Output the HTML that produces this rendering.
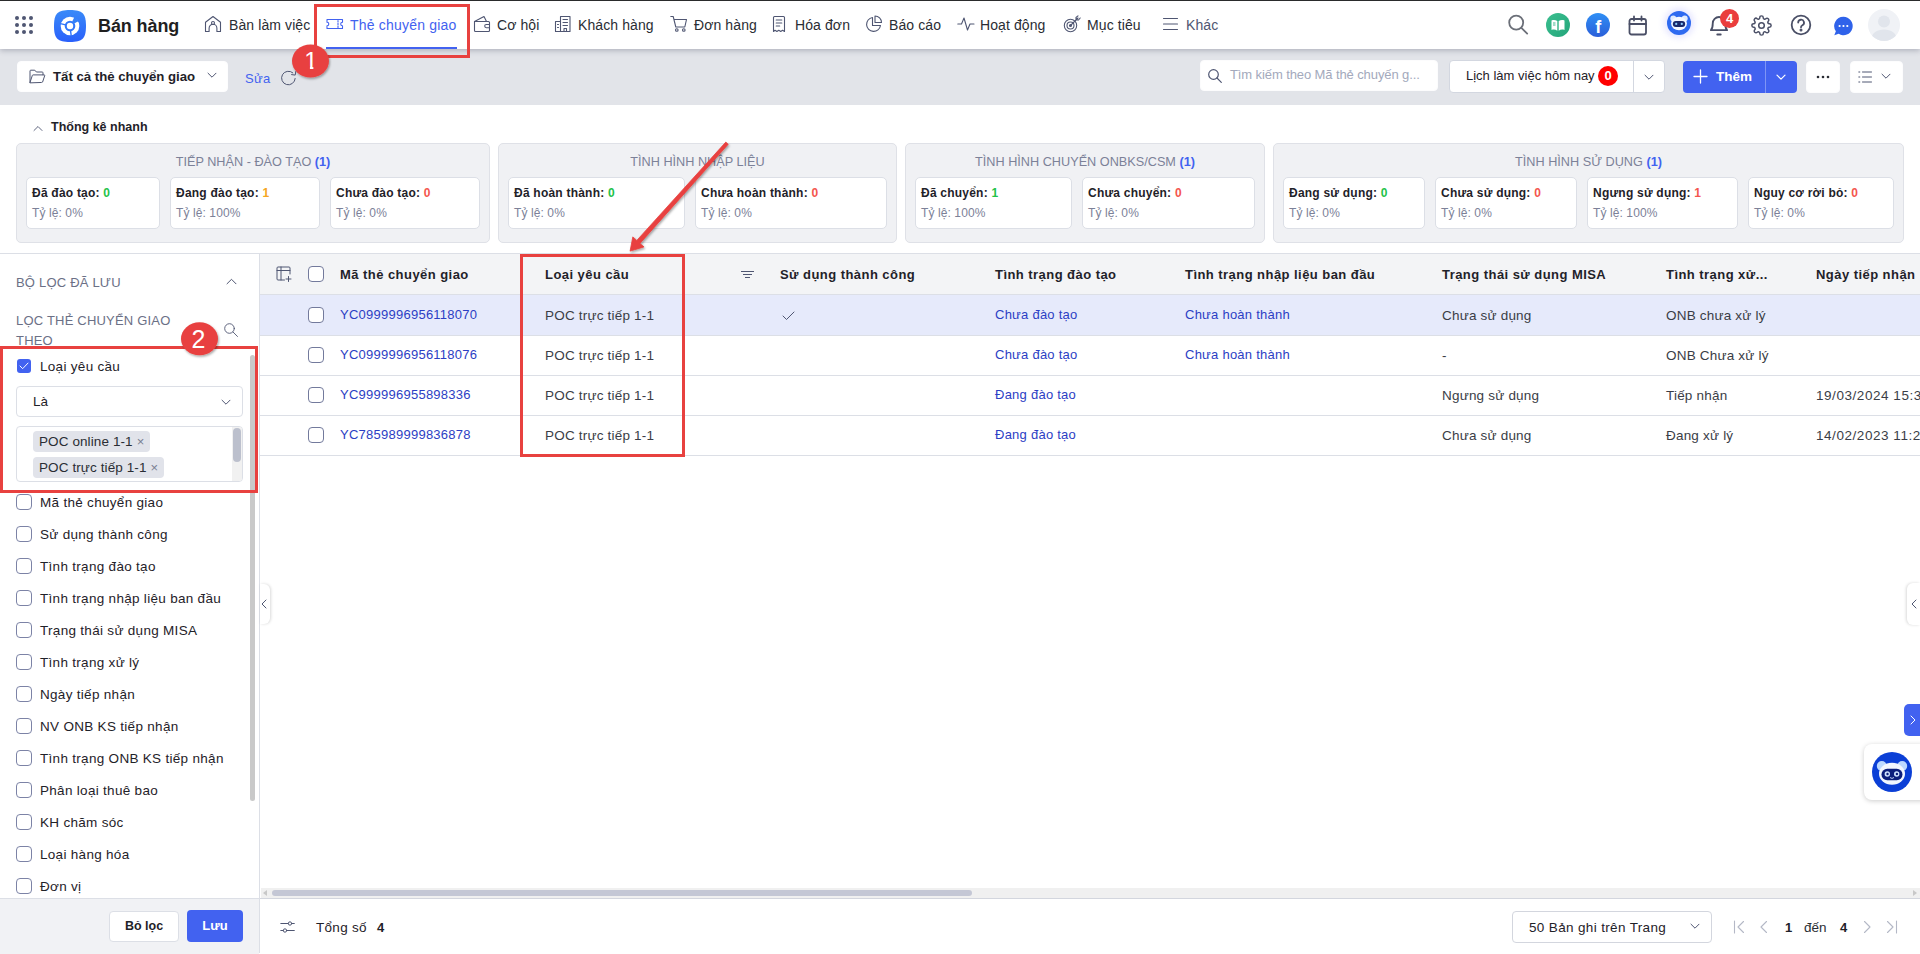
<!DOCTYPE html>
<html lang="vi">
<head>
<meta charset="utf-8">
<title>Thẻ chuyển giao</title>
<style>
*{box-sizing:border-box;margin:0;padding:0}
html,body{width:1920px;height:954px;overflow:hidden;background:#fff}
body{font-family:"Liberation Sans",sans-serif;font-size:13px;color:#1f2229;position:relative}
.abs{position:absolute}
svg{display:block}
/* header */
#topline{left:0;top:0;width:1920px;height:1px;background:#2b2b2b}
#header{left:0;top:1px;width:1920px;height:48px;background:#fff;box-shadow:0 2px 5px rgba(60,66,90,.28);z-index:5}
#toolbar{left:0;top:49px;width:1920px;height:56px;background:#e2e4e9}
.nav{position:absolute;top:0;height:48px;line-height:49px;font-size:14px;color:#2a2d34;white-space:nowrap;letter-spacing:.1px}
.nav svg{position:absolute;top:14px;stroke-width:1.100}
.brand{position:absolute;left:98px;top:0;line-height:51px;font-size:18px;font-weight:bold;color:#1f1f1f;letter-spacing:-.1px}

.nav.act{color:#4262f0;letter-spacing:.2px}
.nav i{position:absolute;left:0;top:15px;width:18px;height:18px}
.ico{fill:none;stroke:#4f5672;stroke-width:1;stroke-linecap:round;stroke-linejoin:round}
.btn{position:absolute;background:#fff;border:1px solid #d3d7e0;border-radius:4px}
.t{position:absolute;white-space:nowrap}

.grp{position:absolute;top:143px;height:100px;background:#f0f1f4;border:1px solid #dfe1e7;border-radius:5px}
.gt{position:absolute;top:144px;height:36px;line-height:37px;text-align:center;font-size:12.700px;color:#7c8198;white-space:nowrap}
.gt b{color:#4262f0}
.card{position:absolute;top:177px;height:52px;background:#fff;border:1px solid #dcdfe6;border-radius:5px;padding:0 0 0 5px;white-space:nowrap}
.card b{display:block;letter-spacing:.22px;font-size:12px;line-height:14px;margin-top:8px;color:#1f2229}
.card span{display:block;letter-spacing:.1px;font-size:12px;line-height:14px;margin-top:6px;color:#7c8198}
.g{color:#1fc24a}.o{color:#f5a623}.r{color:#f4564e}

#side{left:0;top:253px;width:260px;height:700px;border-right:1px solid #dcdfe6;border-top:1px solid #dcdfe6;background:#fff}
.cb{position:absolute;left:16px;width:16px;height:16px;border:1px solid #7c83a6;border-radius:4px;background:#fff}
.fl{position:absolute;left:40px;font-size:13.500px;line-height:18px;color:#1f2229;white-space:nowrap;letter-spacing:.3px}
.sh{position:absolute;left:16px;font-size:13px;line-height:22px;color:#6b7086;letter-spacing:.2px;white-space:nowrap}
.tag{position:absolute;left:33px;height:21px;line-height:22.500px;background:#e1e3ea;border-radius:4px;padding:0 6px;font-size:13.500px;color:#2a2d34;white-space:nowrap;letter-spacing:.1px}
.tag i{font-style:normal;color:#7a7f92;margin-left:4px;font-size:13px}

#th{left:260px;top:253px;width:1660px;height:42px;background:#f3f4f6;border-top:1px solid #dcdfe6;border-bottom:1px solid #dcdfe6}
.hc{position:absolute;top:254px;line-height:41px;font-size:13px;font-weight:bold;color:#1f2229;white-space:nowrap;letter-spacing:.45px}
.rl{position:absolute;left:260px;width:1660px;height:1px;background:#dcdfe6}
.c{position:absolute;line-height:42px;font-size:13.500px;color:#3a3d46;white-space:nowrap;letter-spacing:.2px}
.lk{color:#2c3ec4;font-size:13px;letter-spacing:.25px}
.tcb{position:absolute;left:308px;width:16px;height:16px;border:1px solid #737a9c;border-radius:4px;background:#fff}
</style>
</head>
<body>
<div id="topline" class="abs"></div>
<div id="header" class="abs">
  <!-- app grid -->
  <svg class="abs" style="left:14px;top:14px" width="20" height="20" viewBox="0 0 20 20" fill="#4f5672">
    <circle cx="3" cy="3" r="2"/><circle cx="10" cy="3" r="2"/><circle cx="17" cy="3" r="2"/>
    <circle cx="3" cy="10" r="2"/><circle cx="10" cy="10" r="2"/><circle cx="17" cy="10" r="2"/>
    <circle cx="3" cy="17" r="2"/><circle cx="10" cy="17" r="2"/><circle cx="17" cy="17" r="2"/>
  </svg>
  <!-- logo -->
  <svg class="abs" style="left:54px;top:9px" width="32" height="32" viewBox="0 0 32 32">
    <defs><linearGradient id="lg" x1="0" y1="0" x2="0" y2="1"><stop offset="0" stop-color="#3a8af8"/><stop offset="1" stop-color="#2a60fb"/></linearGradient></defs>
    <path d="M16 0C28.500 0 32 3.500 32 16S28.500 32 16 32 0 28.500 0 16 3.500 0 16 0Z" fill="url(#lg)"/>
    <circle cx="16" cy="16" r="9.300" fill="#fff"/>
    <circle cx="16" cy="16" r="5.300" fill="#3277f9"/>
    <circle cx="16" cy="16" r="3.200" fill="#fff"/>
    <path d="M18.1 11.7L20.4 7.0L24.7 11.0L20.2 13.6Z" fill="#3480f8"/>
    <path d="M11.6 14.9L6.5 13.6M16.5 20.5L17.2 25.7" stroke="#3174f9" stroke-width="1.400" fill="none"/>
  </svg>
  <div class="brand">Bán hàng</div>

  <!-- nav -->
  <div class="nav" style="left:204px;padding-left:25px">Bàn làm việc
    <svg class="ico" style="left:0" width="18" height="18" viewBox="0 0 18 18"><path d="M1.5 16.5V7.2L9 1.5l7.500 5.700v9.300h-3.600v-3.300a3.900 3.900 0 0 0-7.800 0v3.300z"/><circle cx="9" cy="8" r="1.500"/></svg></div>
  <div class="nav act" style="left:326px;padding-left:24px">Thẻ chuyển giao
    <svg class="ico" style="left:0;stroke:#4262f0" width="18" height="18" viewBox="0 0 18 18"><path d="M1 4.500h15.500v2.700a1.800 1.800 0 0 0 0 3.600v2.700H1v-2.700a1.800 1.800 0 0 0 0-3.600z"/><path d="M12 5.500v1.500M12 8.300v1.500M12 11v1.500"/></svg></div>
  <div class="abs" style="left:326px;top:46px;width:131px;height:2px;background:#4262f0"></div>
  <div class="nav" style="left:473px;padding-left:24px">Cơ hội
    <svg class="ico" style="left:0" width="18" height="18" viewBox="0 0 18 18"><path d="M1.500 6.500h14a1 1 0 0 1 1 1v8a1 1 0 0 1-1 1h-13a1 1 0 0 1-1-1z"/><path d="M1.500 6.500L11 1.500l2.500 5"/><path d="M16.500 9.500h-3.200a1.600 1.600 0 0 0 0 3.200h3.200"/></svg></div>
  <div class="nav" style="left:554px;padding-left:24px">Khách hàng
    <svg class="ico" style="left:0" width="18" height="18" viewBox="0 0 18 18"><path d="M6.500 16.500V1.500h9.500v15z"/><path d="M6.500 6.500H1.500v10h5"/><path d="M9 4.500h4.500M9 7.500h4.500M9 10.500h4.500M3.500 9.500h1M3.500 12.500h1M10 16.500v-3h2.500v3"/></svg></div>
  <div class="nav" style="left:670px;padding-left:24px">Đơn hàng
    <svg class="ico" style="left:0" width="18" height="18" viewBox="0 0 18 18"><path d="M.8 1.500h2.400l2.600 10.500h9l1.700-7.500H4"/><circle cx="6.800" cy="15" r="1.300"/><circle cx="13.800" cy="15" r="1.300"/></svg></div>
  <div class="nav" style="left:771px;padding-left:24px">Hóa đơn
    <svg class="ico" style="left:0" width="18" height="18" viewBox="0 0 18 18"><path d="M2.500 16.500V2.500a1 1 0 0 1 1-1h9a1 1 0 0 1 1 1v14l-1.900-1.200-1.900 1.200-1.900-1.200-1.900 1.200-1.900-1.200z"/><path d="M5.200 5h5.600M5.200 8h5.600M5.200 11h3.500"/></svg></div>
  <div class="nav" style="left:865px;padding-left:24px">Báo cáo
    <svg class="ico" style="left:0" width="18" height="18" viewBox="0 0 18 18"><path d="M7.500 2.500a7 7 0 1 0 8 8h-8z"/><path d="M10 1v6.500h6.500A6.500 6.500 0 0 0 10 1z"/></svg></div>
  <div class="nav" style="left:957px;padding-left:23px">Hoạt động
    <svg class="ico" style="left:0" width="18" height="18" viewBox="0 0 18 18"><path d="M.8 9h3.700L7 3l3.500 12 2.500-6h4"/></svg></div>
  <div class="nav" style="left:1063px;padding-left:24px">Mục tiêu
    <svg class="ico" style="left:0" width="18" height="18" viewBox="0 0 18 18"><circle cx="7.500" cy="10.500" r="6.200"/><circle cx="7.500" cy="10.500" r="3.500"/><circle cx="7.500" cy="10.500" r="1"/><path d="M7.500 10.500L15 3M13 2.500v2.500h2.500M15 .8l-2 1.700M17.200 3l-1.700 2"/></svg></div>
  <div class="nav" style="left:1162px;padding-left:24px;color:#4f5672">Khác
    <svg class="ico" style="left:0" width="18" height="18" viewBox="0 0 18 18"><path d="M1.500 3.500h14M1.500 9h14M1.500 14.500h14"/></svg></div>

  <!-- right icons -->
  <svg class="abs" style="left:1505px;top:10px" width="26" height="26" viewBox="0 0 26 26" fill="none" stroke="#6b6f78" stroke-width="1.800" stroke-linecap="round"><circle cx="11.200" cy="11.600" r="7"/><path d="M16.400 16.800l5.800 5.800"/></svg>
  <svg class="abs" style="left:1546px;top:12px" width="24" height="24" viewBox="0 0 24 24"><defs><linearGradient id="gg" x1="0" y1="0" x2="1" y2="1"><stop offset="0" stop-color="#3bbf8f"/><stop offset="1" stop-color="#23a57a"/></linearGradient></defs><circle cx="12" cy="12" r="12" fill="url(#gg)"/><path d="M5.500 7.500c2-.8 4-.6 5.800.6v9.600c-1.800-1.200-3.800-1.400-5.800-.6z" fill="#fff"/><path d="M18.500 7.500c-2-.8-4-.6-5.800.6v9.600c1.800-1.200 3.800-1.400 5.800-.6z" fill="#fff"/><path d="M7 10h2.500M7 12h2.500" stroke="#2fb085" stroke-width=".9"/></svg>
  <svg class="abs" style="left:1586px;top:12px" width="24" height="24" viewBox="0 0 24 24"><defs><linearGradient id="fg" x1="0" y1="0" x2="0" y2="1"><stop offset="0" stop-color="#2f8ff5"/><stop offset="1" stop-color="#2b5fd9"/></linearGradient></defs><circle cx="12" cy="12" r="12" fill="url(#fg)"/><text x="12.300" y="20" text-anchor="middle" font-family="Liberation Sans,sans-serif" font-weight="bold" font-size="18" fill="#fff">f</text></svg>
  <svg class="abs" style="left:1627px;top:13px" width="22" height="24" viewBox="0 0 22 24" fill="none" stroke="#4a4f66" stroke-width="1.800" stroke-linecap="round" stroke-linejoin="round"><rect x="2.500" y="5" width="16.500" height="15.500" rx="2"/><path d="M2.500 10h16.500M7 2.500v4M14.500 2.500v4"/></svg>
  <div class="abs" style="left:1667px;top:10px;width:24px;height:24px;border-radius:50%;background:#2e6af0;box-shadow:0 0 6px 3px rgba(130,130,255,.2)"></div>
  <svg class="abs" style="left:1667px;top:10px" width="24" height="24" viewBox="0 0 26 26"><circle cx="6.800" cy="8" r="3.200" fill="#dfeaff"/><circle cx="19.200" cy="8" r="3.200" fill="#dfeaff"/><ellipse cx="13" cy="13.500" rx="8.600" ry="7.400" fill="#f4f8ff"/><rect x="6.300" y="10.800" width="13.400" height="6.600" rx="3.300" fill="#1a2a6c"/><circle cx="10" cy="14" r="1.200" fill="#8fd0ff"/><circle cx="16" cy="14" r="1.200" fill="#8fd0ff"/></svg>
  <svg class="abs" style="left:1704px;top:9px" width="30" height="30" viewBox="0 0 26 26" fill="none" stroke="#4a4f66" stroke-width="1.600" stroke-linecap="round" stroke-linejoin="round"><path d="M6 17.500c1.300-1.500 1.600-3 1.600-6a5.400 5.400 0 0 1 10.800 0c0 3 .3 4.500 1.600 6z"/><path d="M11.500 21.200h3"/></svg>
  <div class="abs" style="left:1720px;top:8px;width:19px;height:19px;border-radius:50%;background:#ea3d3d;color:#fff;font-weight:bold;font-size:13px;line-height:19px;text-align:center">4</div>
  <svg class="abs" style="left:1751px;top:14px" width="21" height="21" viewBox="0 0 24 24" fill="none" stroke="#4a4f66" stroke-width="1.700" stroke-linecap="round" stroke-linejoin="round"><circle cx="12" cy="12" r="3.200"/><path d="M19.400 15a1.650 1.650 0 0 0 .33 1.820l.06.06a2 2 0 1 1-2.830 2.830l-.06-.06a1.650 1.650 0 0 0-1.820-.33 1.650 1.650 0 0 0-1 1.510V21a2 2 0 0 1-4 0v-.09A1.650 1.650 0 0 0 9 19.400a1.650 1.650 0 0 0-1.820.33l-.06.06a2 2 0 1 1-2.830-2.830l.06-.06a1.650 1.650 0 0 0 .33-1.820 1.650 1.650 0 0 0-1.510-1H3a2 2 0 0 1 0-4h.09A1.650 1.650 0 0 0 4.600 9a1.650 1.650 0 0 0-.33-1.820l-.06-.06a2 2 0 1 1 2.830-2.830l.06.06a1.650 1.650 0 0 0 1.820.33H9a1.650 1.650 0 0 0 1-1.510V3a2 2 0 0 1 4 0v.09a1.650 1.650 0 0 0 1 1.510 1.650 1.650 0 0 0 1.820-.33l.06-.06a2 2 0 1 1 2.830 2.830l-.06.06a1.650 1.650 0 0 0-.33 1.820V9a1.650 1.650 0 0 0 1.510 1H21a2 2 0 0 1 0 4h-.09a1.650 1.650 0 0 0-1.510 1z"/></svg>
  <svg class="abs" style="left:1789px;top:12px" width="24" height="24" viewBox="0 0 24 24" fill="none" stroke="#4a4f66" stroke-width="1.800" stroke-linecap="round" stroke-linejoin="round"><circle cx="12" cy="12" r="9.300"/><path d="M9.200 9.600a2.900 2.900 0 1 1 4.200 2.600c-.9.500-1.400 1-1.400 2.100"/><circle cx="12" cy="17" r=".6" fill="#4a4f66"/></svg>
  <svg class="abs" style="left:1832px;top:14px" width="22" height="22" viewBox="0 0 24 24"><path d="M12.500 2a10 10 0 1 1-5.200 18.500L2.500 22l1.700-4.300A10 10 0 0 1 12.500 2z" fill="#2f62ea"/><circle cx="8.300" cy="12" r="1.200" fill="#fff"/><circle cx="12.500" cy="12" r="1.200" fill="#fff"/><circle cx="16.700" cy="12" r="1.200" fill="#fff"/></svg>
  <svg class="abs" style="left:1868px;top:8px" width="32" height="32" viewBox="0 0 32 32"><defs><clipPath id="av"><circle cx="16" cy="16" r="16"/></clipPath></defs><circle cx="16" cy="16" r="16" fill="#f0f2f6"/><g clip-path="url(#av)" fill="#e1e5ec"><circle cx="16" cy="12.500" r="6"/><path d="M3 32c0-8 6-11.500 13-11.500S29 24 29 32z"/></g></svg>
</div>
<div id="toolbar" class="abs">
  <div class="btn" style="left:17px;top:12px;width:211px;height:31px;border-color:#fdfdfe"></div>
  <svg class="abs ico" style="left:29px;top:20px" width="17" height="16" viewBox="0 0 17 16"><path d="M1 13.500V2a.8.800 0 0 1 .8-.8h4l1.600 1.800h5.800a.8.800 0 0 1 .8.800v2"/><path d="M1 13.500l2.300-7a.8.800 0 0 1 .8-.6h11a.6.600 0 0 1 .6.800l-2.100 6.300a.8.800 0 0 1-.8.500z"/></svg>
  <div class="t" style="left:53px;top:12px;line-height:31px;font-size:13.200px;font-weight:bold;color:#1f2229">Tất cả thẻ chuyển giao</div>
  <svg class="abs ico" style="left:207px;top:23px" width="10" height="7" viewBox="0 0 10 7"><path d="M1 1.200l4 4 4-4"/></svg>
  <div class="t" style="left:245px;top:14px;line-height:31px;font-size:13px;letter-spacing:.3px;color:#4262f0">Sửa</div>
  <svg class="abs ico" style="left:280px;top:20px;stroke-width:1" width="18" height="18" viewBox="0 0 18 18"><path d="M15.200 9.500A6.800 6.800 0 1 1 12.800 3.800"/><path d="M15.800 2.500l-.6 3.600-3.600-.5"/></svg>

  <div class="btn" style="left:1200px;top:11px;width:238px;height:31px;border-color:#fcfcfd"></div>
  <svg class="abs" style="left:1207px;top:19px" width="16" height="16" viewBox="0 0 16 16" fill="none" stroke="#4f5672" stroke-width="1.200" stroke-linecap="round"><circle cx="6.500" cy="6.500" r="4.800"/><path d="M10 10l4.300 4.300"/></svg>
  <div class="t" style="left:1230px;top:10px;line-height:31px;font-size:13px;letter-spacing:-.1px;color:#a3a9bc">Tìm kiếm theo Mã thẻ chuyến g...</div>

  <div class="btn" style="left:1449px;top:11px;width:216px;height:33px"></div>
  <div class="abs" style="left:1633px;top:11px;width:1px;height:33px;background:#d3d7e0"></div>
  <div class="t" style="left:1466px;top:11px;line-height:31px;font-size:13px;color:#1f2229">Lịch làm việc hôm nay</div>
  <div class="abs" style="left:1598px;top:17px;width:20px;height:20px;border-radius:50%;background:#f00;color:#fff;font-weight:bold;font-size:13px;line-height:20px;text-align:center">0</div>
  <svg class="abs ico" style="left:1644px;top:25px" width="10" height="7" viewBox="0 0 10 7"><path d="M1 1.200l4 4 4-4"/></svg>

  <div class="abs" style="left:1683px;top:12px;width:114px;height:32px;border-radius:4px;background:#4262f0"></div>
  <div class="abs" style="left:1765px;top:12px;width:1px;height:32px;background:#7f95f5"></div>
  <svg class="abs" style="left:1693px;top:20px" width="15" height="15" viewBox="0 0 15 15" fill="none" stroke="#fff" stroke-width="1.300" stroke-linecap="round"><path d="M7.500 1v13M1 7.500h13"/></svg>
  <div class="t" style="left:1716px;top:12px;line-height:31px;font-size:13.500px;font-weight:bold;color:#fff">Thêm</div>
  <svg class="abs" style="left:1776px;top:25px" width="10" height="7" viewBox="0 0 10 7" fill="none" stroke="#fff" stroke-width="1.200" stroke-linecap="round" stroke-linejoin="round"><path d="M1 1.200l4 4 4-4"/></svg>

  <div class="btn" style="left:1806px;top:12px;width:34px;height:32px;border-color:#fcfcfd"></div>
  <svg class="abs" style="left:1816px;top:26px" width="14" height="4" viewBox="0 0 14 4" fill="#2a2d34"><circle cx="2" cy="2" r="1.300"/><circle cx="7" cy="2" r="1.300"/><circle cx="12" cy="2" r="1.300"/></svg>
  <div class="btn" style="left:1850px;top:12px;width:53px;height:32px;border-color:#fcfcfd"></div>
  <svg class="abs ico" style="left:1858px;top:21px" width="14" height="14" viewBox="0 0 14 14"><path d="M4.500 2h9M4.500 7h9M4.500 12h9M.8 2h1M.8 7h1M.8 12h1"/></svg>
  <svg class="abs ico" style="left:1881px;top:24px" width="10" height="7" viewBox="0 0 10 7"><path d="M1 1.200l4 4 4-4"/></svg>
</div>

<!-- quick stats -->
<svg class="abs ico" style="left:33px;top:125px;stroke-width:.9" width="10" height="7" viewBox="0 0 10 7"><path d="M1 5.500l4-4 4 4"/></svg>
<div class="t" style="left:51px;top:118px;line-height:18px;font-size:12.500px;font-weight:bold;color:#1f2229">Thống kê nhanh</div>
<div class="grp" style="left:16px;width:474px"></div>
<div class="gt" style="left:16px;width:474px">TIẾP NHẬN - ĐÀO TẠO <b>(1)</b></div>
<div class="card" style="left:26px;width:134px"><b>Đã đào tạo: <i class="g" style="font-style:normal">0</i></b><span>Tỷ lệ: 0%</span></div>
<div class="card" style="left:170px;width:150px"><b>Đang đào tạo: <i class="o" style="font-style:normal">1</i></b><span>Tỷ lệ: 100%</span></div>
<div class="card" style="left:330px;width:150px"><b>Chưa đào tạo: <i class="r" style="font-style:normal">0</i></b><span>Tỷ lệ: 0%</span></div>
<div class="grp" style="left:498px;width:399px"></div>
<div class="gt" style="left:498px;width:399px">TÌNH HÌNH NHẬP LIỆU</div>
<div class="card" style="left:508px;width:177px"><b>Đã hoàn thành: <i class="g" style="font-style:normal">0</i></b><span>Tỷ lệ: 0%</span></div>
<div class="card" style="left:695px;width:192px"><b>Chưa hoàn thành: <i class="r" style="font-style:normal">0</i></b><span>Tỷ lệ: 0%</span></div>
<div class="grp" style="left:905px;width:360px"></div>
<div class="gt" style="left:905px;width:360px">TÌNH HÌNH CHUYỂN ONBKS/CSM <b>(1)</b></div>
<div class="card" style="left:915px;width:157px"><b>Đã chuyển: <i class="g" style="font-style:normal">1</i></b><span>Tỷ lệ: 100%</span></div>
<div class="card" style="left:1082px;width:173px"><b>Chưa chuyển: <i class="r" style="font-style:normal">0</i></b><span>Tỷ lệ: 0%</span></div>
<div class="grp" style="left:1273px;width:631px"></div>
<div class="gt" style="left:1273px;width:631px">TÌNH HÌNH SỬ DỤNG <b>(1)</b></div>
<div class="card" style="left:1283px;width:142px"><b>Đang sử dụng: <i class="g" style="font-style:normal">0</i></b><span>Tỷ lệ: 0%</span></div>
<div class="card" style="left:1435px;width:142px"><b>Chưa sử dụng: <i class="r" style="font-style:normal">0</i></b><span>Tỷ lệ: 0%</span></div>
<div class="card" style="left:1587px;width:151px"><b>Ngưng sử dụng: <i class="r" style="font-style:normal">1</i></b><span>Tỷ lệ: 100%</span></div>
<div class="card" style="left:1748px;width:146px"><b>Nguy cơ rời bỏ: <i class="r" style="font-style:normal">0</i></b><span>Tỷ lệ: 0%</span></div>

<!-- sidebar -->
<div id="side" class="abs"></div>
<div class="sh" style="top:272px">BỘ LỌC ĐÃ LƯU</div>
<svg class="abs ico" style="left:226px;top:278px" width="11" height="7" viewBox="0 0 11 7"><path d="M1 5.800l4.500-4.500 4.500 4.500"/></svg>
<div class="sh" style="top:310px">LỌC THẺ CHUYỂN GIAO</div>
<div class="sh" style="top:330px">THEO</div>
<svg class="abs" style="left:223px;top:322px" width="16" height="16" viewBox="0 0 16 16" fill="none" stroke="#4f5672" stroke-width=".9" stroke-linecap="round"><circle cx="6.500" cy="6.500" r="4.800"/><path d="M10 10l4.500 4.500"/></svg>

<div class="abs" style="left:17px;top:359px;width:14px;height:14px;border-radius:3px;background:#4262f0"></div>
<svg class="abs" style="left:19px;top:362px" width="10" height="8" viewBox="0 0 11 9" fill="none" stroke="#fff" stroke-width="1.100" stroke-linecap="round" stroke-linejoin="round"><path d="M1 4.500l3 3L10 1.200"/></svg>
<div class="fl" style="top:358px">Loại yêu cầu</div>
<div class="btn" style="left:16px;top:386px;width:227px;height:31px;border-color:#dcdfe6"></div>
<div class="t" style="left:33px;top:386px;line-height:31px;font-size:13.500px;color:#1f2229">Là</div>
<svg class="abs ico" style="left:221px;top:399px" width="10" height="7" viewBox="0 0 10 7"><path d="M1 1.200l4 4 4-4"/></svg>
<div class="btn" style="left:16px;top:426px;width:227px;height:56px;border-color:#dcdfe6"></div>
<div class="abs" style="left:232px;top:427px;width:10px;height:54px;background:#f1f1f1;border-radius:0 3px 3px 0"></div>
<div class="abs" style="left:233px;top:428px;width:8px;height:34px;background:#bcc0cd;border-radius:4px"></div>
<div class="tag" style="top:431px">POC online 1-1<i>×</i></div>
<div class="tag" style="top:457px">POC trực tiếp 1-1<i>×</i></div>
<div class="cb" style="top:494px"></div><div class="fl" style="top:494px">Mã thẻ chuyển giao</div>
<div class="cb" style="top:526px"></div><div class="fl" style="top:526px">Sử dụng thành công</div>
<div class="cb" style="top:558px"></div><div class="fl" style="top:558px">Tình trạng đào tạo</div>
<div class="cb" style="top:590px"></div><div class="fl" style="top:590px">Tình trạng nhập liệu ban đầu</div>
<div class="cb" style="top:622px"></div><div class="fl" style="top:622px">Trạng thái sử dụng MISA</div>
<div class="cb" style="top:654px"></div><div class="fl" style="top:654px">Tình trạng xử lý</div>
<div class="cb" style="top:686px"></div><div class="fl" style="top:686px">Ngày tiếp nhận</div>
<div class="cb" style="top:718px"></div><div class="fl" style="top:718px">NV ONB KS tiếp nhận</div>
<div class="cb" style="top:750px"></div><div class="fl" style="top:750px">Tình trạng ONB KS tiếp nhận</div>
<div class="cb" style="top:782px"></div><div class="fl" style="top:782px">Phân loại thuê bao</div>
<div class="cb" style="top:814px"></div><div class="fl" style="top:814px">KH chăm sóc</div>
<div class="cb" style="top:846px"></div><div class="fl" style="top:846px">Loại hàng hóa</div>
<div class="cb" style="top:878px"></div><div class="fl" style="top:878px">Đơn vị</div>

<div class="abs" style="left:250px;top:355px;width:5px;height:446px;background:#c9c9c9;border-radius:3px"></div>
<div class="abs" style="left:0;top:898px;width:259px;height:56px;background:#f1f2f5;border-top:1px solid #dcdfe6"></div>
<div class="btn" style="left:109px;top:911px;width:70px;height:31px;border-color:#dcdfe6;text-align:center;line-height:29px;font-size:12.500px;font-weight:bold;color:#1f2229">Bỏ lọc</div>
<div class="abs" style="left:187px;top:910px;width:56px;height:32px;border-radius:4px;background:#4262f0;text-align:center;line-height:31px;font-size:13px;font-weight:bold;color:#fff">Lưu</div>
<!-- collapse handle -->
<div class="abs" style="left:260px;top:584px;width:10px;height:40px;background:#fff;border-radius:0 6px 6px 0;box-shadow:1px 0 3px rgba(0,0,0,.15)"></div>
<svg class="abs ico" style="left:261px;top:599px" width="6" height="10" viewBox="0 0 6 10"><path d="M5 1L1 5l4 4"/></svg>

<!-- table -->
<div id="th" class="abs"></div>
<div class="abs" style="left:260px;top:295px;width:1660px;height:40px;background:#e6eafb"></div>
<svg class="abs ico" style="left:276px;top:266px" width="16" height="16" viewBox="0 0 16 16"><path d="M14 8V2a1 1 0 0 0-1-1H2a1 1 0 0 0-1 1v11a1 1 0 0 0 1 1h6.500"/><path d="M1 4.500h13M5 1v13M12.500 10.500v5M10 13h5"/></svg>
<div class="tcb" style="top:266px"></div>
<div class="hc" style="left:340px">Mã thẻ chuyển giao</div>
<div class="hc" style="left:545px">Loại yêu cầu</div>
<svg class="abs" style="left:740px;top:271px" width="15" height="8" viewBox="0 0 15 8" fill="none" stroke="#4f5672" stroke-width="1" shape-rendering="crispEdges"><path d="M1 .5h13M3 3.500h9M5 6.500h5"/></svg>
<div class="hc" style="left:780px">Sử dụng thành công</div>
<div class="hc" style="left:995px">Tình trạng đào tạo</div>
<div class="hc" style="left:1185px">Tình trạng nhập liệu ban đầu</div>
<div class="hc" style="left:1442px">Trạng thái sử dụng MISA</div>
<div class="hc" style="left:1666px">Tình trạng xử...</div>
<div class="hc" style="left:1816px">Ngày tiếp nhận</div>
<div class="rl" style="top:335px"></div>
<div class="tcb" style="top:307px"></div>
<div class="c lk" style="left:340px;top:294px">YC0999996956118070</div>
<div class="c" style="left:545px;top:295px">POC trực tiếp 1-1</div>
<div class="c lk" style="left:995px;top:294px">Chưa đào tạo</div>
<div class="c lk" style="left:1185px;top:294px">Chưa hoàn thành</div>
<div class="c" style="left:1442px;top:295px">Chưa sử dụng</div>
<div class="c" style="left:1666px;top:295px">ONB chưa xử lý</div>
<div class="rl" style="top:375px"></div>
<div class="tcb" style="top:347px"></div>
<div class="c lk" style="left:340px;top:334px">YC0999996956118076</div>
<div class="c" style="left:545px;top:335px">POC trực tiếp 1-1</div>
<div class="c lk" style="left:995px;top:334px">Chưa đào tạo</div>
<div class="c lk" style="left:1185px;top:334px">Chưa hoàn thành</div>
<div class="c" style="left:1442px;top:335px">-</div>
<div class="c" style="left:1666px;top:335px">ONB Chưa xử lý</div>
<div class="rl" style="top:415px"></div>
<div class="tcb" style="top:387px"></div>
<div class="c lk" style="left:340px;top:374px">YC999996955898336</div>
<div class="c" style="left:545px;top:375px">POC trực tiếp 1-1</div>
<div class="c lk" style="left:995px;top:374px">Đang đào tạo</div>
<div class="c" style="left:1442px;top:375px">Ngưng sử dụng</div>
<div class="c" style="left:1666px;top:375px">Tiếp nhận</div>
<div class="c" style="left:1816px;top:375px;letter-spacing:.55px">19/03/2024 15:31</div>
<div class="rl" style="top:455px"></div>
<div class="tcb" style="top:427px"></div>
<div class="c lk" style="left:340px;top:414px">YC785989999836878</div>
<div class="c" style="left:545px;top:415px">POC trực tiếp 1-1</div>
<div class="c lk" style="left:995px;top:414px">Đang đào tạo</div>
<div class="c" style="left:1442px;top:415px">Chưa sử dụng</div>
<div class="c" style="left:1666px;top:415px">Đang xử lý</div>
<div class="c" style="left:1816px;top:415px;letter-spacing:.55px">14/02/2023 11:23</div>
<svg class="abs ico" style="left:782px;top:311px" width="13" height="10" viewBox="0 0 13 10"><path d="M1 5l3.500 3.500L12 1"/></svg>
<!-- h scrollbar -->
<div class="abs" style="left:261px;top:888px;width:1659px;height:10px;background:#f0f0f0"></div>
<div class="abs" style="left:272px;top:890px;width:700px;height:6px;background:#c4c7d5;border-radius:3px"></div>
<svg class="abs" style="left:263px;top:890px" width="5" height="6" viewBox="0 0 5 6"><path d="M4 0L0 3l4 3z" fill="#c8c8c8"/></svg>
<svg class="abs" style="left:1912px;top:890px" width="5" height="6" viewBox="0 0 5 6"><path d="M1 0l4 3-4 3z" fill="#c8c8c8"/></svg>
<!-- footer -->
<div class="abs" style="left:260px;top:898px;width:1660px;height:1px;background:#d3d6de"></div>
<svg class="abs ico" style="left:280px;top:920px" width="15" height="14" viewBox="0 0 15 14"><path d="M.8 3.500h7.400M11.800 3.500h2.500M.8 10.500h2.500M6.800 10.500h7.500"/><circle cx="10" cy="3.500" r="1.700"/><circle cx="5" cy="10.500" r="1.700"/></svg>
<div class="t" style="left:316px;top:918px;line-height:20px;font-size:13.500px;color:#1f2229;letter-spacing:.3px">Tổng số</div>
<div class="t" style="left:377px;top:918px;line-height:20px;font-size:13px;font-weight:bold;color:#1f2229">4</div>
<div class="btn" style="left:1512px;top:911px;width:200px;height:32px;border-color:#d3d6de"></div>
<div class="t" style="left:1529px;top:912px;line-height:32px;font-size:13.500px;color:#1f2229;letter-spacing:.35px">50 Bản ghi trên Trang</div>
<svg class="abs ico" style="left:1690px;top:923px" width="10" height="7" viewBox="0 0 10 7"><path d="M1 1.200l4 4 4-4"/></svg>
<svg class="abs" style="left:1733px;top:920px" width="12" height="14" viewBox="0 0 12 14" fill="none" stroke="#b4b8c6" stroke-width="1.100" stroke-linecap="round" stroke-linejoin="round"><path d="M1.500 1v12M10.500 1.500L5 7l5.500 5.500"/></svg>
<svg class="abs" style="left:1760px;top:920px" width="8" height="14" viewBox="0 0 8 14" fill="none" stroke="#b4b8c6" stroke-width="1.100" stroke-linecap="round" stroke-linejoin="round"><path d="M6.500 1.500L1 7l5.500 5.500"/></svg>
<div class="t" style="left:1785px;top:918px;line-height:20px;font-size:13px;font-weight:bold;color:#1f2229">1</div>
<div class="t" style="left:1804px;top:918px;line-height:20px;font-size:13.500px;color:#2a2d34">đến</div>
<div class="t" style="left:1840px;top:918px;line-height:20px;font-size:13px;font-weight:bold;color:#1f2229">4</div>
<svg class="abs" style="left:1863px;top:920px" width="8" height="14" viewBox="0 0 8 14" fill="none" stroke="#b4b8c6" stroke-width="1.100" stroke-linecap="round" stroke-linejoin="round"><path d="M1.500 1.500L7 7l-5.500 5.500"/></svg>
<svg class="abs" style="left:1886px;top:920px" width="12" height="14" viewBox="0 0 12 14" fill="none" stroke="#b4b8c6" stroke-width="1.100" stroke-linecap="round" stroke-linejoin="round"><path d="M10.500 1v12M1.500 1.500L7 7l-5.500 5.500"/></svg>
<!-- right floating -->
<div class="abs" style="left:1907px;top:583px;width:13px;height:42px;background:#fff;border-radius:6px 0 0 6px;box-shadow:-1px 0 3px rgba(0,0,0,.15)"></div>
<svg class="abs ico" style="left:1911px;top:599px" width="6" height="10" viewBox="0 0 6 10"><path d="M5 1L1 5l4 4"/></svg>
<div class="abs" style="left:1904px;top:704px;width:16px;height:32px;background:#4262f0;border-radius:5px 0 0 5px"></div>
<svg class="abs" style="left:1910px;top:715px" width="6" height="10" viewBox="0 0 6 10" fill="none" stroke="#fff" stroke-width="1" stroke-linecap="round" stroke-linejoin="round"><path d="M1 1l4 4-4 4"/></svg>
<div class="abs" style="left:1864px;top:744px;width:60px;height:56px;background:#fff;border-radius:8px 0 0 8px;box-shadow:0 1px 5px rgba(0,0,0,.2)"></div>
<svg class="abs" style="left:1872px;top:752px" width="40" height="40" viewBox="0 0 40 40"><circle cx="20" cy="20" r="20" fill="#0b3fd6"/><circle cx="9.800" cy="14" r="5" fill="#bcd9ff"/><circle cx="30.200" cy="14" r="5" fill="#bcd9ff"/><ellipse cx="20" cy="21.800" rx="13" ry="11" fill="#f2f7ff"/><rect x="9.500" y="16.800" width="21" height="11.400" rx="5.700" fill="#0c1f7c"/><circle cx="15.300" cy="22" r="2.700" fill="#cfe2ff"/><circle cx="24.700" cy="22" r="2.700" fill="#cfe2ff"/><circle cx="15.500" cy="22" r="1.200" fill="#0c1f7c"/><circle cx="24.900" cy="22" r="1.200" fill="#0c1f7c"/><path d="M18.300 25.800q1.700 1.500 3.400 0" stroke="#cfe2ff" stroke-width=".9" fill="none" stroke-linecap="round"/></svg>

<!-- annotations -->
<div class="abs" style="left:314px;top:4px;width:156px;height:54px;border:3px solid #e8413f;z-index:20"></div>
<div class="abs" style="left:0;top:346px;width:258px;height:147px;border:3px solid #e8413f;z-index:20"></div>
<div class="abs" style="left:520px;top:254px;width:165px;height:203px;border:3px solid #e8413f;z-index:20"></div>
<svg class="abs" style="left:0;top:0;z-index:21" width="1920" height="954" viewBox="0 0 1920 954">
  <defs><filter id="sh" x="-30%" y="-30%" width="160%" height="160%"><feDropShadow dx="1" dy="1.500" stdDeviation="1.300" flood-color="#000" flood-opacity=".35"/></filter></defs>
  <g filter="url(#sh)">
    <path d="M725.800 142.100L728.200 144.300L640 243.400L644 246.900L630.100 251.100L632.800 236.900L636.800 240.400Z" fill="#e8413f" stroke="#e8413f" stroke-width=".8" stroke-linejoin="round"/>
    <ellipse cx="310.500" cy="61" rx="18.500" ry="16.500" fill="#e8413f"/>
    <ellipse cx="199.500" cy="338.800" rx="18.500" ry="16.500" fill="#e8413f"/>
  </g>
  <clipPath id="c1"><path d="M304 48h9.400v22h-3.500v-3.600H304z"/></clipPath>
  <text x="311" y="68.700" text-anchor="middle" font-family="Liberation Sans,sans-serif" font-size="24" fill="#fff" clip-path="url(#c1)">1</text>
  <text x="198.500" y="347.700" text-anchor="middle" font-family="Liberation Sans,sans-serif" font-size="25" fill="#fff">2</text>
</svg>
</body>
</html>
